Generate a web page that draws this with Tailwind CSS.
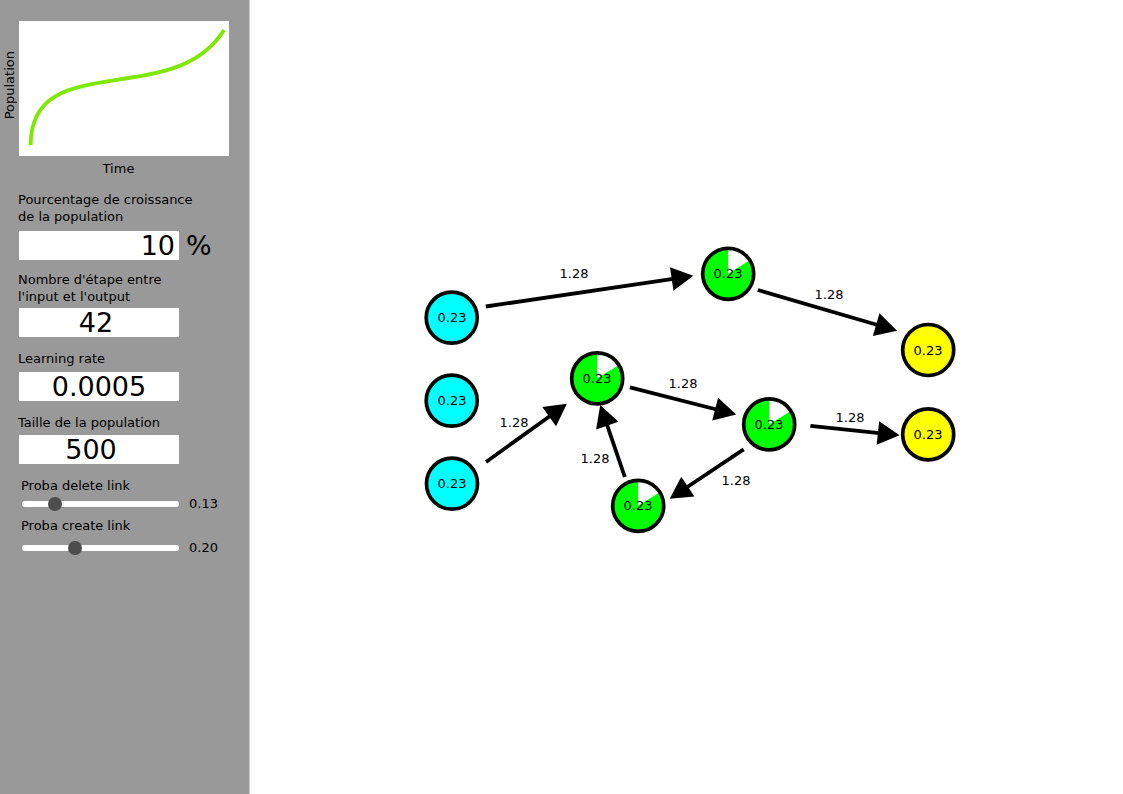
<!DOCTYPE html>
<html lang="fr">
<head>
<meta charset="utf-8">
<meta name="viewport" content="width=device-width, initial-scale=1">
<title>Population</title>
<script src="https://cdn.jsdelivr.net/npm/@tailwindcss/browser@4"></script>
</head>
<body class="flex min-h-screen bg-white font-['DejaVu_Sans',sans-serif] text-[13px] leading-[17px] text-black">
  <aside class="w-[250px] shrink-0 border-r border-[#cccccc] bg-[#999999] pt-[21px]">
    <figure>
      <div class="flex items-stretch pr-5">
        <div class="flex w-[19px] shrink-0 items-center justify-center pr-px pb-[6px]">
          <span class="rotate-180 [writing-mode:vertical-rl]">Population</span>
        </div>
        <svg class="block h-auto w-full min-w-0 bg-white" viewBox="19 21 210 135" fill="none" role="img" aria-label="Population / Time">
          <path d="M30.6 145C31 91 73 87 122 79C165 73 202 65 224 30" stroke="#7de800" stroke-width="3.8"/>
        </svg>
      </div>
      <figcaption class="pt-1 pr-3 text-center">Time</figcaption>
    </figure>

    <form class="pt-[14px] pl-[18px]">
      <div class="flex flex-col gap-[6px]">
        <label for="growth">Pourcentage de croissance<br>de la population</label>
        <div class="flex items-center gap-[7px] pl-px">
          <input id="growth" type="text" value="10" class="h-[29px] w-[160px] bg-white pr-1 text-right text-[27px] leading-[29px]">
          <span class="text-[27px] leading-[29px]">%</span>
        </div>
      </div>
      <div class="mt-[11px] flex flex-col gap-[3px]">
        <label for="steps">Nombre d'étape entre<br>l'input et l'output</label>
        <input id="steps" type="text" value="42" class="ml-px h-[29px] w-[160px] bg-white pr-[6px] text-center text-[27px] leading-[29px]">
      </div>
      <div class="mt-[13px] flex flex-col gap-[5px]">
        <label for="rate">Learning rate</label>
        <input id="rate" type="text" value="0.0005" class="ml-px h-[29px] w-[160px] bg-white text-center text-[27px] leading-[29px]">
      </div>
      <div class="mt-[13px] flex flex-col gap-1">
        <label for="size">Taille de la population</label>
        <input id="size" type="text" value="500" class="ml-px h-[29px] w-[160px] bg-white pr-4 text-center text-[27px] leading-[29px]">
      </div>
      <div class="mt-[13px] pl-[3px]">
        <label for="delete" class="block">Proba delete link</label>
        <div class="mt-px flex items-center gap-[10px]">
          <input id="delete" type="range" min="0" max="1" step="0.01" value="0.18" class="ml-px h-[6px] w-[157px] appearance-none rounded-full bg-white [&::-webkit-slider-thumb]:size-[14px] [&::-webkit-slider-thumb]:appearance-none [&::-webkit-slider-thumb]:rounded-full [&::-webkit-slider-thumb]:bg-[#4d4d4d]">
          <output for="delete">0.13</output>
        </div>
        <label for="create" class="mt-[5px] block">Proba create link</label>
        <div class="mt-[5px] flex items-center gap-[10px]">
          <input id="create" type="range" min="0" max="1" step="0.01" value="0.32" class="ml-px h-[6px] w-[157px] appearance-none rounded-full bg-white [&::-webkit-slider-thumb]:size-[14px] [&::-webkit-slider-thumb]:appearance-none [&::-webkit-slider-thumb]:rounded-full [&::-webkit-slider-thumb]:bg-[#4d4d4d]">
          <output for="create">0.20</output>
        </div>
      </div>
    </form>
  </aside>

  <main class="min-w-0 flex-1">
    <svg class="block h-auto w-full" viewBox="250 0 873 794" role="img" aria-label="Network">
      <defs>
        <marker id="head" markerUnits="userSpaceOnUse" markerWidth="24" markerHeight="26" refX="2" refY="13" orient="auto">
          <path d="M0.5 1.2L22.3 13L0.5 24.8Z"/>
        </marker>
        <g id="hidden-node">
          <circle r="25.5" fill="#00ff00"/>
          <path d="M0 0V-25.5A25.5 25.5 0 0 1 21.6 -13.5Z" fill="#fff"/>
          <circle r="25.5" fill="none" stroke="#050500" stroke-width="3.7"/>
        </g>
        <circle id="disc" r="25.5" stroke="#050500" stroke-width="3.7"/>
      </defs>

      <!-- input nodes -->
      <g fill="#00ffff">
        <use href="#disc" x="451.7" y="317.7"/>
        <use href="#disc" x="451.7" y="400.7"/>
        <use href="#disc" x="452" y="483.7"/>
      </g>
      <!-- hidden nodes -->
      <use href="#hidden-node" x="728.2" y="273.8"/>
      <use href="#hidden-node" x="597.2" y="378.4"/>
      <use href="#hidden-node" x="769.2" y="424.4"/>
      <use href="#hidden-node" x="638.2" y="505.8"/>
      <!-- output nodes -->
      <g fill="#ffff00">
        <use href="#disc" x="928.2" y="350"/>
        <use href="#disc" x="928.2" y="434.4"/>
      </g>

      <!-- links -->
      <g stroke="#000" stroke-width="3.8" fill="none">
        <path d="M485.8 306.5L673.2 278.8" marker-end="url(#head)"/>
        <path d="M757.8 290L877.6 325" marker-end="url(#head)"/>
        <path d="M486 462L550.4 415.7" marker-end="url(#head)"/>
        <path d="M630 387.3L716.6 409.5" marker-end="url(#head)"/>
        <path d="M743.7 449.3L686.6 487.5" marker-end="url(#head)"/>
        <path d="M624.8 477L606.8 424.2" marker-end="url(#head)"/>
        <path d="M810.4 425.8L879.4 433.2" marker-end="url(#head)"/>
      </g>

      <g text-anchor="middle" fill="#000" class="text-[13px]">
        <text x="452" y="322">0.23</text>
        <text x="452" y="405">0.23</text>
        <text x="452" y="488">0.23</text>
        <text x="728" y="278">0.23</text>
        <text x="597" y="383">0.23</text>
        <text x="769" y="429">0.23</text>
        <text x="638" y="510">0.23</text>
        <text x="928" y="355">0.23</text>
        <text x="928" y="439">0.23</text>
        <text x="574" y="278">1.28</text>
        <text x="829" y="299">1.28</text>
        <text x="514" y="427">1.28</text>
        <text x="683" y="388">1.28</text>
        <text x="595" y="463">1.28</text>
        <text x="736" y="485">1.28</text>
        <text x="850" y="422">1.28</text>
      </g>
    </svg>
  </main>
</body>
</html>
